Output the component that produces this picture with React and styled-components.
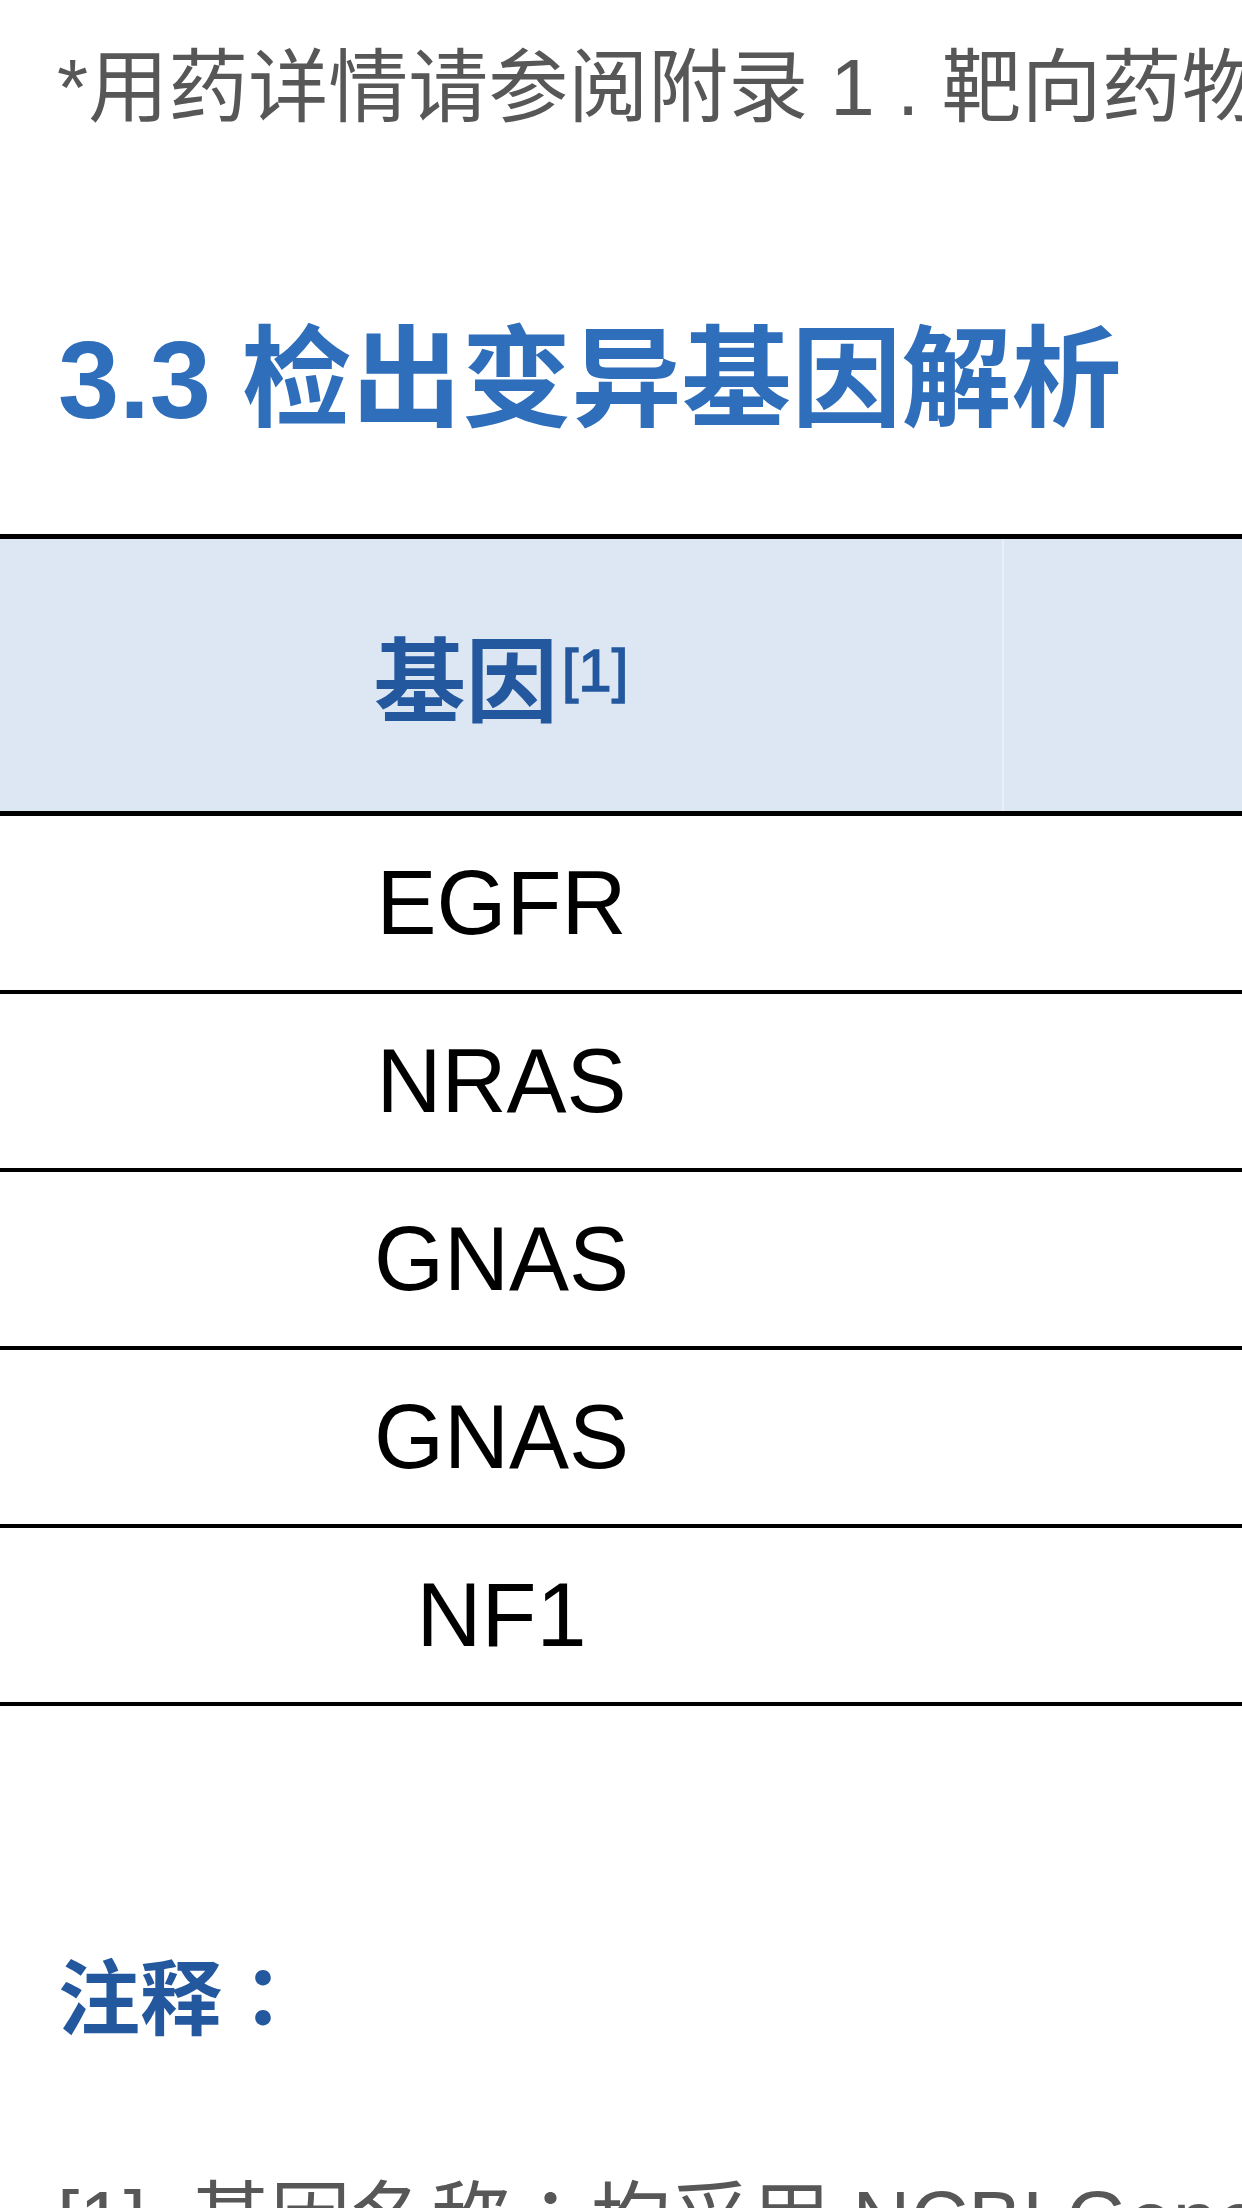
import styled, { createGlobalStyle } from "styled-components";

const GlobalStyle = createGlobalStyle`
  html, body {
    margin: 0;
    padding: 0;
    background: #ffffff;
  }
  body {
    font-family: "Liberation Sans", "Noto Sans CJK SC", sans-serif;
    overflow: hidden;
  }
`;

const Page = styled.div`
  width: 1242px;
  height: 2208px;
  overflow: hidden;
  display: flex;
  flex-direction: column;
`;

const Note = styled.p`
  margin: 48px 0 0 57px;
  font-family: "Liberation Sans", "Noto Sans CJK SC", sans-serif;
  font-size: 80px;
  line-height: 80px;
  color: #575757;
  white-space: nowrap;
`;

const Heading = styled.h2`
  margin: 197px 0 0 58px;
  font-family: "Liberation Sans", "Noto Sans CJK SC", sans-serif;
  font-size: 110px;
  line-height: 110px;
  font-weight: 700;
  color: #2f6ebb;
  white-space: nowrap;
`;

const Table = styled.table`
  margin-top: 99px;
  width: 1242px;
  border-collapse: collapse;
  table-layout: fixed;
`;

const HeadCell = styled.th`
  height: 272px;
  padding: 0;
  background: #dde7f4;
  border-top: 5px solid #000;
  border-bottom: 5px solid #000;
  border-right: ${(props) => (props.divider ? "2px solid #e8eff8" : "none")};
  width: ${(props) => props.width || "auto"};
  text-align: center;
  font-family: "Noto Sans CJK SC", sans-serif;
  font-size: 92px;
  font-weight: 700;
  color: #24589e;
  line-height: 1;
`;

const Sup = styled.span`
  font-family: "Liberation Sans", sans-serif;
  font-size: 60px;
  font-weight: 400;
  vertical-align: 24px;
  line-height: 0;
  margin-left: 4px;
  -webkit-text-stroke: 1.5px #24589e;
`;

const Cell = styled.td`
  height: 174px;
  padding: 0;
  border-bottom: 4px solid #000;
  text-align: center;
  font-family: "Liberation Sans", sans-serif;
  font-size: 90px;
  color: #000;
  line-height: 1;
`;

const NotesLabel = styled.h3`
  margin: 246px 0 0 58px;
  font-family: "Noto Sans CJK TC", sans-serif;
  font-size: 82px;
  line-height: 82px;
  font-weight: 700;
  color: #24589e;
  white-space: nowrap;
`;

const NotesText = styled.p`
  margin: 146px 0 0 57px;
  font-family: "Liberation Sans", "Noto Sans CJK TC", sans-serif;
  font-size: 80px;
  line-height: 80px;
  color: #575757;
  white-space: nowrap;
`;

const genes = ["EGFR", "NRAS", "GNAS", "GNAS", "NF1"];

export default function App() {
  return (
    <Page>
      <GlobalStyle />
      <Note>*用药详情请参阅附录 1 . 靶向药物说明</Note>
      <Heading>3.3 检出变异基因解析</Heading>
      <Table>
        <thead>
          <tr>
            <HeadCell width="1002px" divider>
              基因<Sup>[1]</Sup>
            </HeadCell>
            <HeadCell />
          </tr>
        </thead>
        <tbody>
          {genes.map((gene, i) => (
            <tr key={i}>
              <Cell>{gene}</Cell>
              <Cell />
            </tr>
          ))}
        </tbody>
      </Table>
      <NotesLabel>注释：</NotesLabel>
      <NotesText>[1]. 基因名称：均采用 NCBI Gene 数据库中的官方名称</NotesText>
    </Page>
  );
}
